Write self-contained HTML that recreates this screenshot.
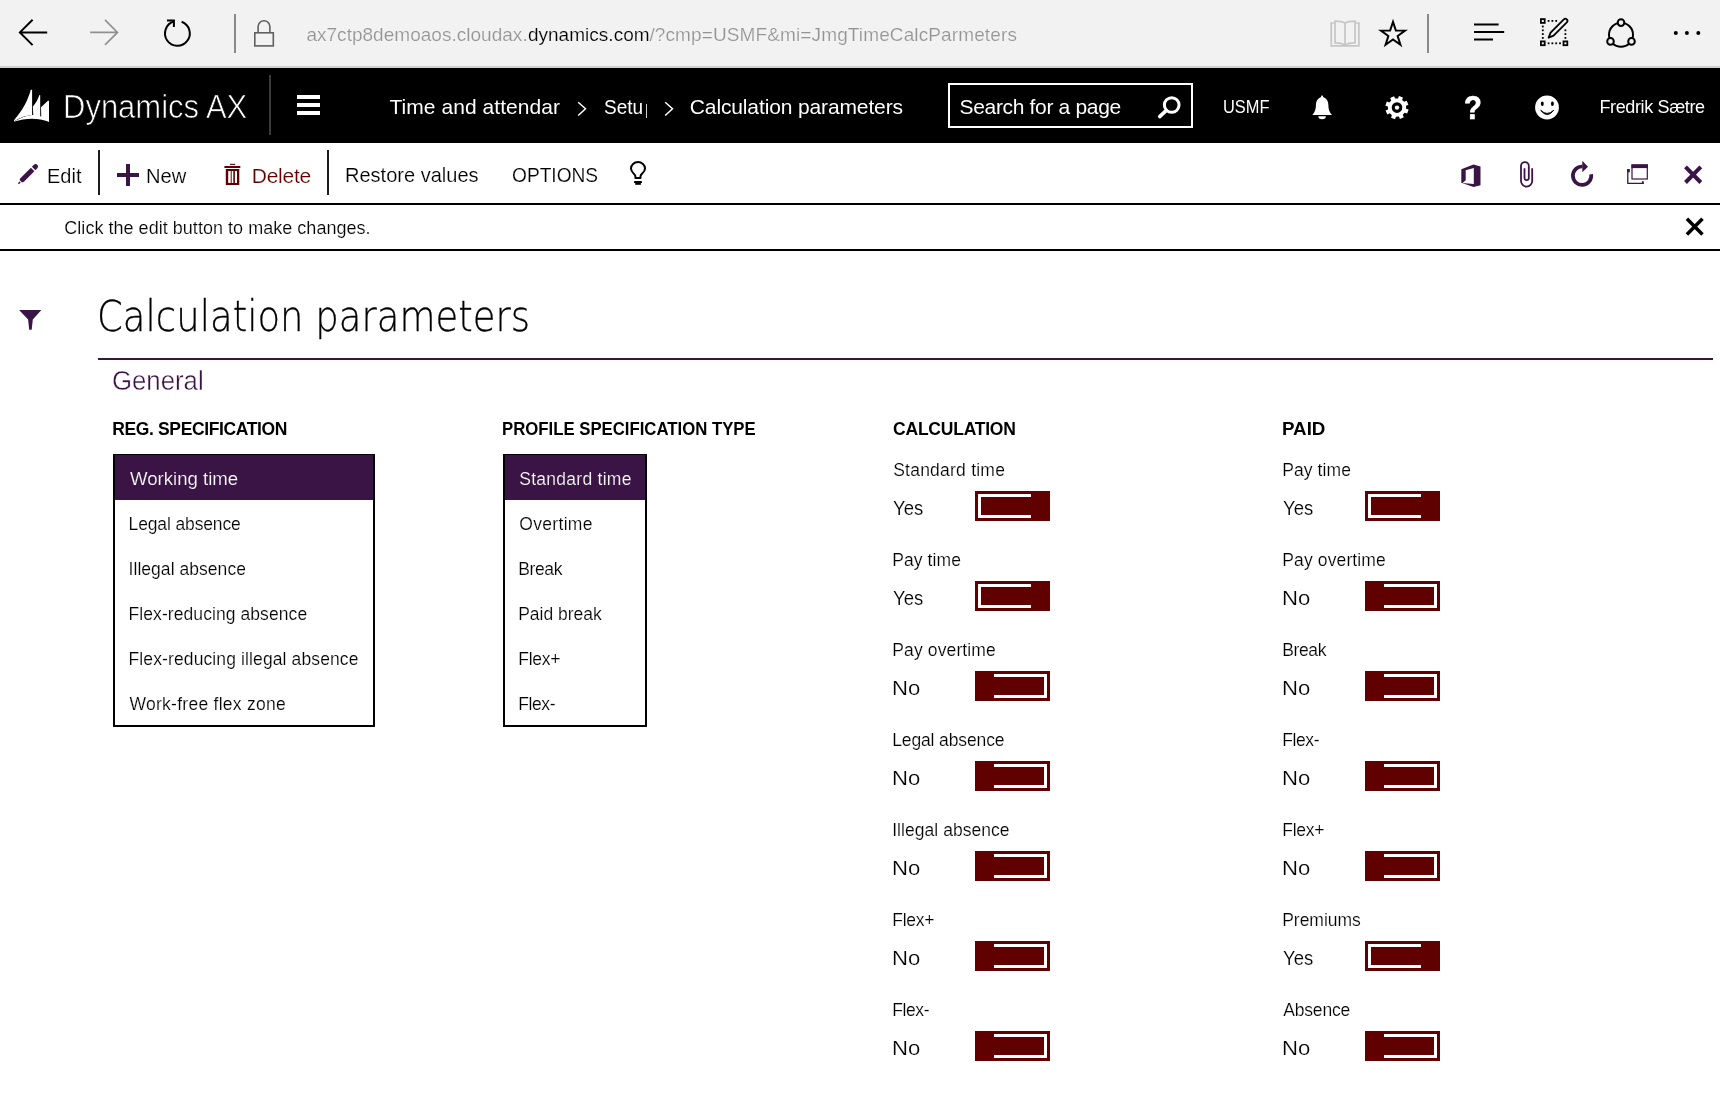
<!DOCTYPE html>
<html lang="en"><head><meta charset="utf-8"><title>Calculation parameters</title>
<style>
html,body{margin:0;padding:0;background:#fff;}
body{width:1720px;height:1105px;position:relative;overflow:hidden;font-family:"Liberation Sans", sans-serif;}
.t{position:absolute;white-space:pre;display:block;}
.b{position:absolute;display:block;}
.layer{position:absolute;left:0;top:0;width:1720px;height:1105px;will-change:transform;display:block;}
svg{position:absolute;overflow:visible;}
#chrome{left:0;top:0;width:1720px;height:66px;background:#f2f2f2;border-bottom:2px solid #d0d0d0;}
#nav{left:0;top:68px;width:1720px;height:75px;background:#000;}
#search{left:948px;top:83px;width:241px;height:41px;border:2px solid #fff;}
.hl{left:0;width:1720px;height:2px;background:#000;}
.vs{width:2px;background:#1c1c1c;top:150px;height:45px;}
.lb{border:2px solid #000;border-top-width:1px;box-sizing:border-box;background:#fff;top:454px;height:273px;}
.lb i{display:block;height:45px;background:#3b1446;}
.tg{position:absolute;width:75px;height:30px;background:#610000;}
.tg i{position:absolute;top:3px;width:50px;height:18px;border:3px solid #fff;}
.tg.on i{left:3px;border-right:0;}
.tg.off i{left:19px;border-left:0;}
</style></head><body>
<div class="b" id="chrome"></div>
<div class="b" id="nav"></div>
<div class="b" style="left:234px;top:14px;width:2px;height:39px;background:#8a8a8a"></div>
<div class="b" style="left:1427px;top:14px;width:2px;height:39px;background:#8a8a8a"></div>
<div class="b" style="left:269px;top:75px;width:2px;height:60px;background:#3a3a3a"></div>
<div class="b" style="left:297px;top:95px;width:23px;height:4px;background:#fff"></div>
<div class="b" style="left:297px;top:103px;width:23px;height:4px;background:#fff"></div>
<div class="b" style="left:297px;top:111px;width:23px;height:4px;background:#fff"></div>
<div class="b" style="left:646px;top:104px;width:1px;height:14px;background:#ccc"></div>
<div class="b" id="search"></div>
<div class="b hl" style="top:203px"></div>
<div class="b hl" style="top:249px"></div>
<div class="b vs" style="left:98px"></div>
<div class="b vs" style="left:327px"></div>
<div class="b" style="left:98px;top:358px;width:1615px;height:2px;background:#3b1446"></div>
<div class="b lb" style="left:113px;width:262px"><i></i></div>
<div class="b lb" style="left:503px;width:144px"><i></i></div>
<div class="tg on" style="left:975px;top:491px"><i></i></div>
<div class="tg on" style="left:975px;top:581px"><i></i></div>
<div class="tg off" style="left:975px;top:671px"><i></i></div>
<div class="tg off" style="left:975px;top:761px"><i></i></div>
<div class="tg off" style="left:975px;top:851px"><i></i></div>
<div class="tg off" style="left:975px;top:941px"><i></i></div>
<div class="tg off" style="left:975px;top:1031px"><i></i></div>
<div class="tg on" style="left:1365px;top:491px"><i></i></div>
<div class="tg off" style="left:1365px;top:581px"><i></i></div>
<div class="tg off" style="left:1365px;top:671px"><i></i></div>
<div class="tg off" style="left:1365px;top:761px"><i></i></div>
<div class="tg off" style="left:1365px;top:851px"><i></i></div>
<div class="tg on" style="left:1365px;top:941px"><i></i></div>
<div class="tg off" style="left:1365px;top:1031px"><i></i></div>
<svg width="1720" height="1105" viewBox="0 0 1720 1105" style="left:0;top:0" fill="none">
<g stroke="#000" stroke-width="2" stroke-linecap="butt" stroke-linejoin="miter">
<path d="M47.2 32.4H20.5M32.6 19.7L19.9 32.4L32.6 45.1"/>
</g>
<path d="M90.2 32.4H117M105 19.9L117.5 32.4L105 44.9" stroke="#8f8f8f" stroke-width="1.6"/>
<path d="M181.64 21.75A12.4 12.4 0 1 1 173.77 21.54" stroke="#000" stroke-width="2"/>
<path d="M167 20.6H173.9V27" stroke="#000" stroke-width="2"/>
<rect x="254.8" y="32.8" width="18.5" height="13.1" stroke="#606060" stroke-width="1.6"/>
<path d="M258.1 32.5V26.7a5.9 5.9 0 0 1 11.8 0V32.5" stroke="#606060" stroke-width="1.6"/>
<g stroke="#c6c6c6" stroke-width="1.7">
<path d="M1334.5 23H1331.2V45.9H1358.9V23H1355.6"/>
<path d="M1345 23.2C1342 21.3 1338.5 21.1 1335 21.1V42.9C1338.5 42.9 1342 43.1 1345 45.2C1348 43.1 1351.500 42.9 1355 42.9V21.1C1351.500 21.1 1348 21.3 1345 23.2V45"/>
</g>
<path d="M1393.00 21.90L1395.88 30.54L1404.98 30.61L1397.66 36.01L1400.41 44.69L1393.00 39.40L1385.59 44.69L1388.34 36.01L1381.02 30.61L1390.12 30.54Z" stroke="#000" stroke-width="2" stroke-linejoin="miter" stroke-miterlimit="6"/>
<path d="M1474 24.5H1498.600M1474 32H1504.2M1474 39.4H1493" stroke="#000" stroke-width="2"/>
<g stroke="#000" stroke-width="1.8">
<rect x="1540.9" y="19.1" width="3.8" height="3.8"/>
<rect x="1540.9" y="41.4" width="3.8" height="3.8"/>
<rect x="1563.5" y="41.4" width="3.8" height="3.8"/>
</g>
<rect x="1547.7" y="20.0" width="1.8" height="1.8" fill="#000"/>
<rect x="1551.5" y="20.0" width="1.8" height="1.8" fill="#000"/>
<rect x="1555.3" y="20.0" width="1.8" height="1.8" fill="#000"/>
<rect x="1541.9" y="25.6" width="1.8" height="1.8" fill="#000"/>
<rect x="1541.9" y="29.4" width="1.8" height="1.8" fill="#000"/>
<rect x="1541.9" y="33.2" width="1.8" height="1.8" fill="#000"/>
<rect x="1541.9" y="37.0" width="1.8" height="1.8" fill="#000"/>
<rect x="1547.7" y="42.4" width="1.8" height="1.8" fill="#000"/>
<rect x="1551.5" y="42.4" width="1.8" height="1.8" fill="#000"/>
<rect x="1555.3" y="42.4" width="1.8" height="1.8" fill="#000"/>
<rect x="1559.1" y="42.4" width="1.8" height="1.8" fill="#000"/>
<rect x="1564.5" y="29.4" width="1.8" height="1.8" fill="#000"/>
<rect x="1564.5" y="33.2" width="1.8" height="1.8" fill="#000"/>
<rect x="1564.5" y="37.0" width="1.8" height="1.8" fill="#000"/>
<path transform="translate(1548.2 38) rotate(-45)" d="M0.6 0L5.5 -2.1H24.2A2.1 2.1 0 0 1 24.2 2.1H5.5Z" stroke="#000" stroke-width="1.8" fill="#f2f2f2" stroke-linejoin="round"/>
<circle cx="1621" cy="34.7" r="12" stroke="#000" stroke-width="2"/>
<circle cx="1621" cy="22.6" r="3.3" stroke="#000" stroke-width="2" fill="#f2f2f2"/>
<circle cx="1610.5" cy="41.4" r="3.3" stroke="#000" stroke-width="2" fill="#f2f2f2"/>
<circle cx="1631.5" cy="41.4" r="3.3" stroke="#000" stroke-width="2" fill="#f2f2f2"/>
<circle cx="1675.8" cy="33" r="2" fill="#000"/>
<circle cx="1686.9" cy="33" r="2" fill="#000"/>
<circle cx="1698.3" cy="33" r="2" fill="#000"/>
<g fill="#fff">
<path d="M30.8 89.800H32.1V115.300C26 115.300 19 118 14 121.600V120.200C23 110 28 100 30.8 89.800Z"/>
<path d="M39.4 94.900H40.2V118.200C37.500 117.400 35.500 117 33.300 116.800L32.900 106.400C36 102.800 38 99 39.4 94.900Z"/>
<path d="M47.9 100.700H49V121.700C46 120.300 44 119.500 41.300 118.700L41 107.200Z"/>
<path d="M14 121.700C22 117 28 115.400 32.100 115.100C39 115.300 44 117.200 49 119.700V121.700C38 117.700 26 117.700 14 121.700Z"/>
</g>
<path d="M578.2 102.200L585.500 108.800L578.2 115.500M665.200 102.200L672.500 108.800L665.200 115.500" stroke="#fff" stroke-width="1.5"/>
<circle cx="1171.700" cy="105" r="7.350" stroke="#fff" stroke-width="3"/>
<path d="M1166.300 110.400L1159.700 116.600" stroke="#fff" stroke-width="3.6" stroke-linecap="round"/>
<path fill="#fff" d="M1322.100 95.600c.700 0 1 .500 1 1.300C1326.500 98 1328.400 101 1328.400 105C1328.400 110 1329.800 112.600 1332 115H1312.300C1314.500 112.600 1315.900 110 1315.900 105C1315.900 101 1317.800 98 1321.100 96.900c0-.800.300-1.300 1-1.300Z"/>
<path fill="#fff" d="M1318.300 116.300H1325.900A3.800 3 0 0 1 1318.300 116.300Z"/>
<path fill="#fff" fill-rule="evenodd" d="M1406.14 108.64L1408.64 109.55L1407.17 113.59L1404.67 112.68L1402.73 114.80L1403.85 117.21L1399.95 119.02L1398.83 116.62L1395.96 116.74L1395.05 119.24L1391.01 117.77L1391.92 115.27L1389.80 113.33L1387.39 114.45L1385.58 110.55L1387.98 109.43L1387.86 106.56L1385.36 105.65L1386.83 101.61L1389.33 102.52L1391.27 100.40L1390.15 97.99L1394.05 96.18L1395.17 98.58L1398.04 98.46L1398.95 95.96L1402.99 97.43L1402.08 99.93L1404.20 101.87L1406.61 100.75L1408.42 104.65L1406.02 105.77ZM1402.3 107.6a5.3 5.3 0 1 0 -10.600 0a5.3 5.3 0 1 0 10.600 0Z"/>
<circle cx="1397.0" cy="107.6" r="2.200" fill="#fff"/>
<circle cx="1547" cy="107.500" r="11.900" fill="#fff"/>
<ellipse cx="1542.300" cy="103.800" rx="1.450" ry="2.300" fill="#000"/><ellipse cx="1552.400" cy="103.800" rx="1.450" ry="2.300" fill="#000"/>
<path d="M1540.700 110.200Q1547 116.600 1553.800 110.200Q1547 119 1540.700 110.200Z" fill="#000" stroke="#000" stroke-width=".9" stroke-linejoin="round"/>
<g fill="#3b1446" transform="translate(17.900 184.200) rotate(-45)">
<path d="M0 0L2.900 -1.200V1.200Z"/>
<path d="M4.100 -1.700L6 -2.450H20.800V2.450H6L4.100 1.700Z"/>
<path d="M22.300 -2.450H25A2.450 2.450 0 0 1 25 2.450H22.300Z"/>
</g>
<path fill="#3b1446" d="M126 164h4v9h9v4h-9v9h-4v-9h-9v-4h9Z"/>
<g fill="#610000">
<rect x="230" y="163.800" width="5.200" height="1.100"/>
<rect x="224.400" y="166" width="15.900" height="2"/>
<path fill-rule="evenodd" d="M225.800 169H239.300V185H225.800ZM228.200 171V183H237V171Z"/>
<rect x="230.600" y="171" width="1.300" height="12" opacity=".75"/>
<rect x="233.300" y="171" width="1.600" height="12"/>
</g>
<path d="M635.400 178V176.200C635.400 174 631 172.600 631 168.400A7 6.300 0 0 1 645 168.400C645 172.600 640.500 174 640.500 176.200V178Z" stroke="#000" stroke-width="2" stroke-linejoin="round"/>
<rect x="634" y="181" width="8" height="2.100" rx=".7" fill="#000"/><rect x="635.200" y="183" width="5.700" height="1.800" fill="#000"/>
<path fill="#3b1446" fill-rule="evenodd" d="M1461.300 169.200L1473.500 164.500L1480.500 166.600V185.200L1473.500 186.900L1461.300 182.800ZM1465.700 170.300L1473.800 168V184L1462.600 183.100L1465.700 180.300Z"/>
<path d="M1532.200 168.300V181A5.600 5.600 0 0 1 1521 181V166A3.900 3.900 0 0 1 1528.800 166V178A2.150 2.150 0 0 1 1524.500 178V168.300" stroke="#3b1446" stroke-width="1.800"/>
<path d="M1591.200 174.300A9.200 9.200 0 1 1 1582.500 166.500" stroke="#3b1446" stroke-width="3.700"/>
<path d="M1582.300 160.700L1588 166.700L1582.300 172.300Z" fill="#3b1446"/>
<rect x="1632" y="165" width="15.300" height="14" stroke="#3b1446" stroke-width="1.200"/>
<rect x="1631.400" y="164.400" width="16.500" height="3.700" fill="#3b1446"/>
<path d="M1627.800 169V183.400H1643.700" stroke="#3b1446" stroke-width="1.300"/>
<rect x="1627.200" y="169" width="2.600" height="3.300" fill="#3b1446"/><rect x="1641.900" y="181.200" width="1.800" height="2.800" fill="#3b1446"/>
<path d="M1685.500 166.800L1700.800 182.500M1700.800 166.800L1685.500 182.500" stroke="#3b1446" stroke-width="4"/>
<path d="M1686.900 218.800L1702.500 234.500M1702.500 218.800L1686.900 234.500" stroke="#000" stroke-width="3.500"/>
<path fill="#3b1446" d="M19.100 310.100H41.400L32.800 319.400L31.700 329.800H29.200L28.100 319.400Z"/>
</svg>
<header class="layer" id="browser-text">
<span class="t" style="left:306.41px;top:23.00px;font-size:19px;line-height:23px;letter-spacing:0.023px;color:#949494;-webkit-text-stroke:0.18px #f2f2f2;">ax7ctp8demoaos.cloudax.</span>
<span class="t" style="left:527.91px;top:23.00px;font-size:19px;line-height:23px;letter-spacing:0.026px;color:#000;-webkit-text-stroke:0.18px #f2f2f2;">dynamics.com</span>
<span class="t" style="left:649.41px;top:23.00px;font-size:19px;line-height:23px;letter-spacing:0.120px;color:#949494;-webkit-text-stroke:0.18px #f2f2f2;">/?cmp=USMF&amp;mi=JmgTimeCalcParmeters</span>
</header>
<nav class="layer" id="appbar-text">
<span class="t" style="left:63.32px;top:87.00px;font-size:33px;line-height:40px;letter-spacing:0.002px;color:#fff;transform:scaleX(0.939);transform-origin:0 0;-webkit-text-stroke:0.7px #000;">Dynamics AX</span>
<span class="t" style="left:389.50px;top:94.00px;font-size:21px;line-height:25px;letter-spacing:0.053px;color:#fff;">Time and attendar</span>
<span class="t" style="left:604.30px;top:94.00px;font-size:21px;line-height:25px;letter-spacing:0.007px;color:#fff;transform:scaleX(0.905);transform-origin:0 0;">Setu</span>
<span class="t" style="left:689.80px;top:94.00px;font-size:21px;line-height:25px;letter-spacing:-0.130px;color:#fff;">Calculation parameters</span>
<span class="t" style="left:959.50px;top:94.00px;font-size:21px;line-height:25px;letter-spacing:-0.329px;color:#fff;">Search for a page</span>
<span class="t" style="left:1222.69px;top:96.00px;font-size:18px;line-height:22px;letter-spacing:0.000px;color:#fff;transform:scaleX(0.912);transform-origin:0 0;">USMF</span>
<span class="t" style="left:1463.54px;top:87.00px;font-size:34px;line-height:41px;letter-spacing:0.000px;color:#fff;font-weight:700;transform:scaleX(0.86);transform-origin:0 0;-webkit-text-stroke:0.7px #fff;">?</span>
<span class="t" style="left:1599.50px;top:96.00px;font-size:18px;line-height:22px;letter-spacing:-0.376px;color:#fff;">Fredrik Sætre</span>
</nav>
<div class="layer" id="actionpane-text">
<span class="t" style="left:46.76px;top:163.00px;font-size:21px;line-height:25px;letter-spacing:-0.004px;color:#000;transform:scaleX(0.953);transform-origin:0 0;-webkit-text-stroke:0.18px #fff;">Edit</span>
<span class="t" style="left:146.45px;top:163.00px;font-size:21px;line-height:25px;letter-spacing:0.005px;color:#000;transform:scaleX(0.96);transform-origin:0 0;-webkit-text-stroke:0.18px #fff;">New</span>
<span class="t" style="left:251.81px;top:163.00px;font-size:21px;line-height:25px;letter-spacing:-0.269px;color:#610000;-webkit-text-stroke:0.18px #fff;">Delete</span>
<span class="t" style="left:345.26px;top:162.00px;font-size:21px;line-height:25px;letter-spacing:-0.001px;color:#000;transform:scaleX(0.954);transform-origin:0 0;-webkit-text-stroke:0.18px #fff;">Restore values</span>
<span class="t" style="left:511.50px;top:162.00px;font-size:21px;line-height:25px;letter-spacing:-0.000px;color:#000;transform:scaleX(0.911);transform-origin:0 0;-webkit-text-stroke:0.18px #fff;">OPTIONS</span>
</div>
<div class="layer" id="message-text">
<span class="t" style="left:64.31px;top:217.00px;font-size:18px;line-height:22px;letter-spacing:0.030px;color:#000;-webkit-text-stroke:0.18px #fff;">Click the edit button to make changes.</span>
</div>
<main class="layer" id="form-text">
<span class="t" style="left:96.82px;top:290.00px;font-size:43px;line-height:52px;letter-spacing:0.028px;color:#000;font-weight:200;font-family:'DejaVu Sans','Liberation Sans',sans-serif;transform:scaleX(0.86);transform-origin:0 0;-webkit-text-stroke:0.3px #000;">Calculation parameters</span>
<span class="t" style="left:112.35px;top:365.00px;font-size:27px;line-height:32px;letter-spacing:-0.005px;color:#3b1446;transform:scaleX(0.954);transform-origin:0 0;-webkit-text-stroke:0.4px #fff;">General</span>
<span class="t" style="left:112.30px;top:419.00px;font-size:17.5px;line-height:21px;letter-spacing:-0.374px;color:#000;font-weight:700;">REG. SPECIFICATION</span>
<span class="t" style="left:502.44px;top:419.00px;font-size:17.5px;line-height:21px;letter-spacing:-0.001px;color:#000;font-weight:700;transform:scaleX(0.957);transform-origin:0 0;">PROFILE SPECIFICATION TYPE</span>
<span class="t" style="left:893.10px;top:419.00px;font-size:17.5px;line-height:21px;letter-spacing:-0.233px;color:#000;font-weight:700;">CALCULATION</span>
<span class="t" style="left:1282.33px;top:419.00px;font-size:17.5px;line-height:21px;letter-spacing:0.002px;color:#000;font-weight:700;transform:scaleX(1.07);transform-origin:0 0;">PAID</span>
<span class="t" style="left:129.56px;top:469.00px;font-size:17.5px;line-height:21px;letter-spacing:0.001px;color:#fff;transform:scaleX(1.063);transform-origin:0 0;-webkit-text-stroke:0.18px #3b1446;">Working time</span>
<span class="t" style="left:128.56px;top:514.00px;font-size:17.5px;line-height:21px;letter-spacing:-0.132px;color:#000;-webkit-text-stroke:0.18px #fff;">Legal absence</span>
<span class="t" style="left:128.56px;top:559.00px;font-size:17.5px;line-height:21px;letter-spacing:0.044px;color:#000;-webkit-text-stroke:0.18px #fff;">Illegal absence</span>
<span class="t" style="left:128.56px;top:604.00px;font-size:17.5px;line-height:21px;letter-spacing:0.076px;color:#000;-webkit-text-stroke:0.18px #fff;">Flex-reducing absence</span>
<span class="t" style="left:128.56px;top:649.00px;font-size:17.5px;line-height:21px;letter-spacing:0.115px;color:#000;-webkit-text-stroke:0.18px #fff;">Flex-reducing illegal absence</span>
<span class="t" style="left:129.56px;top:694.00px;font-size:17.5px;line-height:21px;letter-spacing:0.265px;color:#000;-webkit-text-stroke:0.18px #fff;">Work-free flex zone</span>
<span class="t" style="left:519.21px;top:469.00px;font-size:17.5px;line-height:21px;letter-spacing:0.272px;color:#fff;-webkit-text-stroke:0.18px #3b1446;">Standard time</span>
<span class="t" style="left:519.21px;top:514.00px;font-size:17.5px;line-height:21px;letter-spacing:0.333px;color:#000;-webkit-text-stroke:0.18px #fff;">Overtime</span>
<span class="t" style="left:518.21px;top:559.00px;font-size:17.5px;line-height:21px;letter-spacing:-0.371px;color:#000;-webkit-text-stroke:0.18px #fff;">Break</span>
<span class="t" style="left:518.21px;top:604.00px;font-size:17.5px;line-height:21px;letter-spacing:-0.004px;color:#000;-webkit-text-stroke:0.18px #fff;">Paid break</span>
<span class="t" style="left:518.21px;top:649.00px;font-size:17.5px;line-height:21px;letter-spacing:-0.245px;color:#000;-webkit-text-stroke:0.18px #fff;">Flex+</span>
<span class="t" style="left:518.21px;top:694.00px;font-size:17.5px;line-height:21px;letter-spacing:-0.395px;color:#000;-webkit-text-stroke:0.18px #fff;">Flex-</span>
<span class="t" style="left:893.21px;top:460.00px;font-size:17.5px;line-height:21px;letter-spacing:0.230px;color:#000;-webkit-text-stroke:0.18px #fff;">Standard time</span>
<span class="t" style="left:893.21px;top:495.00px;font-size:20.5px;line-height:25px;letter-spacing:0.004px;color:#000;transform:scaleX(0.903);transform-origin:0 0;-webkit-text-stroke:0.18px #fff;">Yes</span>
<span class="t" style="left:892.21px;top:550.00px;font-size:17.5px;line-height:21px;letter-spacing:0.091px;color:#000;-webkit-text-stroke:0.18px #fff;">Pay time</span>
<span class="t" style="left:893.21px;top:585.00px;font-size:20.5px;line-height:25px;letter-spacing:0.004px;color:#000;transform:scaleX(0.903);transform-origin:0 0;-webkit-text-stroke:0.18px #fff;">Yes</span>
<span class="t" style="left:892.21px;top:640.00px;font-size:17.5px;line-height:21px;letter-spacing:0.136px;color:#000;-webkit-text-stroke:0.18px #fff;">Pay overtime</span>
<span class="t" style="left:892.43px;top:675.00px;font-size:20.5px;line-height:25px;letter-spacing:-0.009px;color:#000;transform:scaleX(1.076);transform-origin:0 0;-webkit-text-stroke:0.18px #fff;">No</span>
<span class="t" style="left:892.21px;top:730.00px;font-size:17.5px;line-height:21px;letter-spacing:-0.128px;color:#000;-webkit-text-stroke:0.18px #fff;">Legal absence</span>
<span class="t" style="left:892.43px;top:765.00px;font-size:20.5px;line-height:25px;letter-spacing:-0.009px;color:#000;transform:scaleX(1.076);transform-origin:0 0;-webkit-text-stroke:0.18px #fff;">No</span>
<span class="t" style="left:892.21px;top:820.00px;font-size:17.5px;line-height:21px;letter-spacing:0.044px;color:#000;-webkit-text-stroke:0.18px #fff;">Illegal absence</span>
<span class="t" style="left:892.43px;top:855.00px;font-size:20.5px;line-height:25px;letter-spacing:-0.009px;color:#000;transform:scaleX(1.076);transform-origin:0 0;-webkit-text-stroke:0.18px #fff;">No</span>
<span class="t" style="left:892.21px;top:910.00px;font-size:17.5px;line-height:21px;letter-spacing:-0.245px;color:#000;-webkit-text-stroke:0.18px #fff;">Flex+</span>
<span class="t" style="left:892.43px;top:945.00px;font-size:20.5px;line-height:25px;letter-spacing:-0.009px;color:#000;transform:scaleX(1.076);transform-origin:0 0;-webkit-text-stroke:0.18px #fff;">No</span>
<span class="t" style="left:892.21px;top:1000.00px;font-size:17.5px;line-height:21px;letter-spacing:-0.395px;color:#000;-webkit-text-stroke:0.18px #fff;">Flex-</span>
<span class="t" style="left:892.43px;top:1035.00px;font-size:20.5px;line-height:25px;letter-spacing:-0.009px;color:#000;transform:scaleX(1.076);transform-origin:0 0;-webkit-text-stroke:0.18px #fff;">No</span>
<span class="t" style="left:1282.21px;top:460.00px;font-size:17.5px;line-height:21px;letter-spacing:0.091px;color:#000;-webkit-text-stroke:0.18px #fff;">Pay time</span>
<span class="t" style="left:1283.21px;top:495.00px;font-size:20.5px;line-height:25px;letter-spacing:0.004px;color:#000;transform:scaleX(0.903);transform-origin:0 0;-webkit-text-stroke:0.18px #fff;">Yes</span>
<span class="t" style="left:1282.21px;top:550.00px;font-size:17.5px;line-height:21px;letter-spacing:0.136px;color:#000;-webkit-text-stroke:0.18px #fff;">Pay overtime</span>
<span class="t" style="left:1282.43px;top:585.00px;font-size:20.5px;line-height:25px;letter-spacing:-0.009px;color:#000;transform:scaleX(1.076);transform-origin:0 0;-webkit-text-stroke:0.18px #fff;">No</span>
<span class="t" style="left:1282.21px;top:640.00px;font-size:17.5px;line-height:21px;letter-spacing:-0.371px;color:#000;-webkit-text-stroke:0.18px #fff;">Break</span>
<span class="t" style="left:1282.43px;top:675.00px;font-size:20.5px;line-height:25px;letter-spacing:-0.009px;color:#000;transform:scaleX(1.076);transform-origin:0 0;-webkit-text-stroke:0.18px #fff;">No</span>
<span class="t" style="left:1282.21px;top:730.00px;font-size:17.5px;line-height:21px;letter-spacing:-0.395px;color:#000;-webkit-text-stroke:0.18px #fff;">Flex-</span>
<span class="t" style="left:1282.43px;top:765.00px;font-size:20.5px;line-height:25px;letter-spacing:-0.009px;color:#000;transform:scaleX(1.076);transform-origin:0 0;-webkit-text-stroke:0.18px #fff;">No</span>
<span class="t" style="left:1282.21px;top:820.00px;font-size:17.5px;line-height:21px;letter-spacing:-0.245px;color:#000;-webkit-text-stroke:0.18px #fff;">Flex+</span>
<span class="t" style="left:1282.43px;top:855.00px;font-size:20.5px;line-height:25px;letter-spacing:-0.009px;color:#000;transform:scaleX(1.076);transform-origin:0 0;-webkit-text-stroke:0.18px #fff;">No</span>
<span class="t" style="left:1282.21px;top:910.00px;font-size:17.5px;line-height:21px;letter-spacing:-0.026px;color:#000;-webkit-text-stroke:0.18px #fff;">Premiums</span>
<span class="t" style="left:1283.21px;top:945.00px;font-size:20.5px;line-height:25px;letter-spacing:0.004px;color:#000;transform:scaleX(0.903);transform-origin:0 0;-webkit-text-stroke:0.18px #fff;">Yes</span>
<span class="t" style="left:1283.21px;top:1000.00px;font-size:17.5px;line-height:21px;letter-spacing:-0.165px;color:#000;-webkit-text-stroke:0.18px #fff;">Absence</span>
<span class="t" style="left:1282.43px;top:1035.00px;font-size:20.5px;line-height:25px;letter-spacing:-0.009px;color:#000;transform:scaleX(1.076);transform-origin:0 0;-webkit-text-stroke:0.18px #fff;">No</span>
</main>
</body></html>
